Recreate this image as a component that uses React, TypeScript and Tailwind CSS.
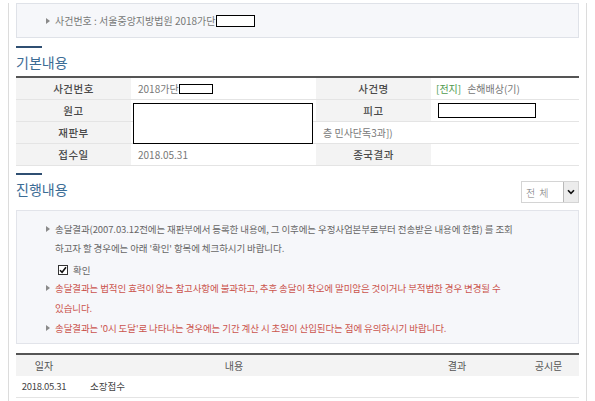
import React from "react";

const Bullet = ({ className = "" }: { className?: string }) => (
  <svg width="4" height="6" viewBox="0 0 4 6" className={className}>
    <path d="M0 0 L4 3 L0 6 Z" fill="#8a8a8a" />
  </svg>
);

const Redact = ({ className }: { className: string }) => (
  <span className={`inline-block border border-black bg-white ${className}`} />
);

const Label = ({ children }: { children: React.ReactNode }) => (
  <div className="flex items-center justify-center bg-[#f3f3f3] text-[10.5px] font-medium tracking-[0.5px] text-[#4a4a4a]">
    {children}
  </div>
);

const Value = ({ children, className = "" }: { children?: React.ReactNode; className?: string }) => (
  <div className={`flex items-center px-[7px] text-[10px] text-[#777] ${className}`}>{children}</div>
);

function SectionTitle({ title }: { title: string }) {
  return (
    <div>
      <div className="h-[2px] w-[26px] bg-[#2f4f72]" />
      <h2 className="mt-[3px] text-[14px] leading-[22px] text-[#3b6c95]">{title}</h2>
    </div>
  );
}

export default function App() {
  return (
    <div className="h-[401px] w-[595px] overflow-hidden bg-white font-['Noto_Sans_CJK_KR',sans-serif]">
      <div className="mx-[8px] h-full border-x border-[#dcdcdc] px-[7px]">
        {/* case number box */}
        <div className="mt-[3px] flex h-[35px] items-center border border-[#dfe2e8] bg-[#f6f7fa] pl-[29px] text-[10px] text-[#777]">
          <Bullet className="mr-[5px]" />
          <span>사건번호 : 서울중앙지방법원 2018가단</span>
          <Redact className="h-[12px] w-[39px]" />
        </div>

        <div className="mt-[8px]">
          <SectionTitle title="기본내용" />
        </div>

        {/* basic info table */}
        <div className="relative mt-[3px] border-t-2 border-[#555]">
          <div className="grid grid-cols-[115px_185px_115px_1fr] [&>div]:h-[22px] [&>div]:border-b [&>div]:border-[#e4e4e4]">
            <Label>사건번호</Label>
            <Value>
              2018가단
              <Redact className="h-[10px] w-[34px]" />
            </Value>
            <Label>사건명</Label>
            <Value className="pl-[5px]">
              <span className="text-[#4f9a4f]">[전지]</span>
              <span className="ml-[6px]">손해배상(기)</span>
            </Value>

            <Label>원고</Label>
            <Value />
            <Label>피고</Label>
            <Value>
              <Redact className="h-[15px] w-[98px]" />
            </Value>

            <Label>재판부</Label>
            <Value />
            <Value className="col-span-2 px-0">층 민사단독3과])</Value>

            <Label>접수일</Label>
            <Value>2018.05.31</Value>
            <Label>종국결과</Label>
            <Value />
          </div>
          <div className="absolute left-[117px] top-[25px] h-[41px] w-[180px] border border-black bg-white" />
        </div>

        <div className="mt-[7px] flex items-start justify-between">
          <SectionTitle title="진행내용" />
          <div className="mt-[8px] flex h-[22px] w-[58px] items-center border border-[#d4d4d4] bg-white">
            <span className="flex-1 pl-[4px] text-[10px] font-light tracking-[4px] text-[#777]">전체</span>
            <span className="flex h-full w-[15px] items-center justify-center border-l border-[#b9b9b9] bg-[#ececec]">
              <svg width="8" height="6" viewBox="0 0 8 6">
                <path d="M1 1.2 L4 4.4 L7 1.2" fill="none" stroke="#111" strokeWidth="1.6" />
              </svg>
            </span>
          </div>
        </div>

        {/* notice box */}
        <div className="mt-[7px] border border-[#e2e4ea] bg-[#f6f7fa] pb-[5px] pl-[29px] pt-[9px] text-[9.5px] tracking-[-0.1px]">
          <div className="flex leading-[19px] text-[#666]">
            <Bullet className="mr-[5px] mt-[6px] shrink-0" />
            <p>
              송달결과(2007.03.12전에는 재판부에서 등록한 내용에, 그 이후에는 우정사업본부로부터 전송받은 내용에 한함) 를 조회
              <br />
              하고자 할 경우에는 아래 '확인' 항목에 체크하시기 바랍니다.
            </p>
          </div>
          <div className="mt-[4px] flex h-[16px] items-center pl-[12px] text-[#666]">
            <span className="flex h-[10px] w-[10px] items-center justify-center border border-[#333] bg-white">
              <svg width="8" height="8" viewBox="0 0 8 8">
                <path d="M1 4.2 L3.1 6.3 L7 1.3" fill="none" stroke="#111" strokeWidth="1.6" />
              </svg>
            </span>
            <span className="ml-[5px]">확인</span>
          </div>
          <div className="flex leading-[20px] text-[#cb544d]">
            <Bullet className="mr-[5px] mt-[7px] shrink-0" />
            <p>
              송달결과는 법적인 효력이 없는 참고사항에 불과하고, 추후 송달이 착오에 말미암은 것이거나 부적법한 경우 변경될 수
              <br />
              있습니다.
            </p>
          </div>
          <div className="flex leading-[20px] text-[#cb544d]">
            <Bullet className="mr-[5px] mt-[7px] shrink-0" />
            <p>송달결과는 '0시 도달'로 나타나는 경우에는 기간 계산 시 초일이 산입된다는 점에 유의하시기 바랍니다.</p>
          </div>
        </div>

        {/* progress table */}
        <div className="mt-[9px] border-t-2 border-[#555]">
          <div className="grid h-[21px] grid-cols-[56px_324px_122px_1fr] items-center bg-[#f3f3f3] text-center text-[10px] text-[#555]">
            <span>일자</span>
            <span>내용</span>
            <span>결과</span>
            <span>공시문</span>
          </div>
          <div className="grid h-[22px] grid-cols-[56px_324px_122px_1fr] items-center border-b border-[#e4e4e4] text-[9.5px] text-[#444]">
            <span className="text-center tracking-[-0.3px]">2018.05.31</span>
            <span className="pl-[18px]">소장접수</span>
            <span />
            <span />
          </div>
        </div>
      </div>
    </div>
  );
}
